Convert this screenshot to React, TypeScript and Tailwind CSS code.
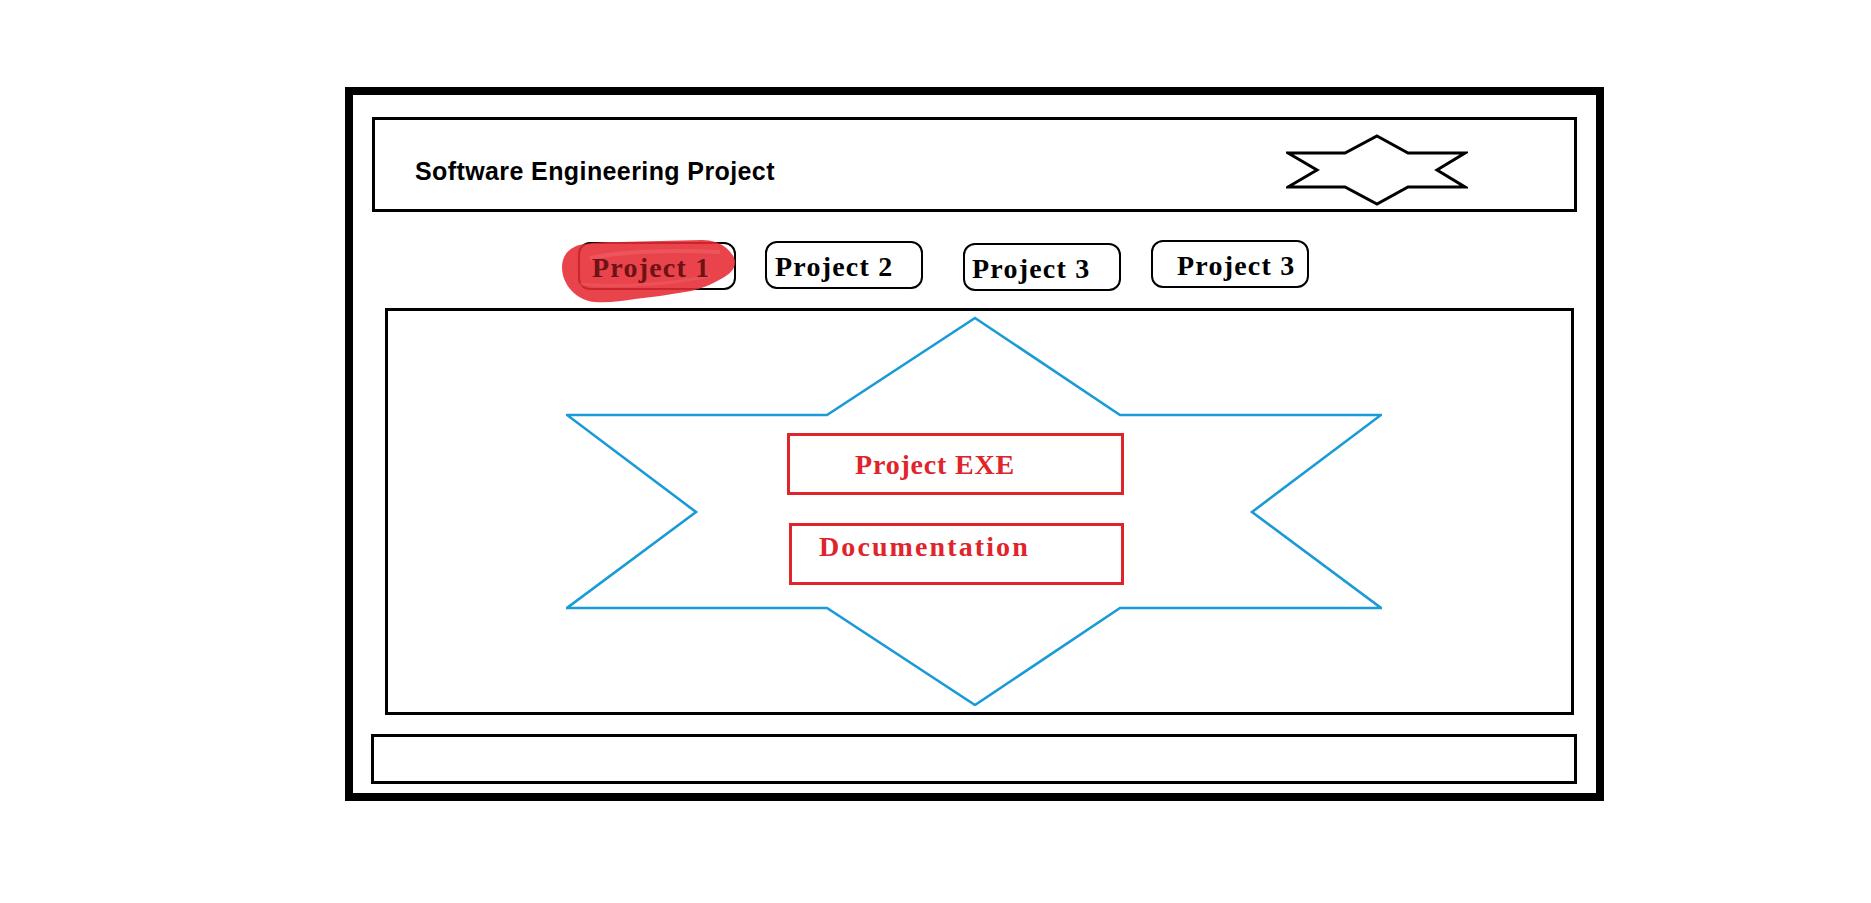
import React from "react";

const serif = "font-['Liberation_Serif',serif] font-bold";

const tabs = [
  { label: "Project 1", box: "ml-[225px] mt-[2px]", text: "pl-[12px]", active: true },
  { label: "Project 2", box: "ml-[29px] mt-[1px]", text: "pl-[8px]" },
  { label: "Project 3", box: "ml-[40px] mt-[3px]", text: "pl-[7px]" },
  { label: "Project 3", box: "ml-[30px]", text: "pl-[24px]" },
];

function HeaderStar() {
  return (
    <svg width="182" height="72" viewBox="0 0 182 72" className="block">
      <polygon
        points="91,2 122,19 179,19 151,36 179,53 122,53 91,70 59,53 2,53 31,36 2,19 59,19"
        fill="none"
        stroke="#000"
        strokeWidth="3"
        strokeLinejoin="miter"
      />
    </svg>
  );
}

function Highlight() {
  // red marker scribble over the active tab
  return (
    <svg
      width="180"
      height="70"
      viewBox="-20 -6 180 70"
      className="pointer-events-none absolute left-[-20px] top-[-6px]"
    >
      <path
        d="M -18 23 C -18 8, -6 1, 5 0 C 20 -2, 30 -2, 39 -2 L 122 -4 C 132 -4, 140 -1, 145 3 C 151 8, 156 14, 155 20 C 154 27, 147 32, 139 36 C 128 42, 118 46, 105 48 C 88 51, 72 53, 55 55 C 42 57, 28 59, 15 58 C -2 57, -18 42, -18 23 Z"
        fill="#e62a33"
        fillOpacity="0.88"
      />
      <path d="M 10 14 C 40 8, 90 6, 140 8" stroke="#f06a70" strokeWidth="4" fill="none" strokeOpacity="0.45" />
      <path d="M 0 40 C 40 44, 90 40, 130 32" stroke="#f06a70" strokeWidth="3" fill="none" strokeOpacity="0.35" />
    </svg>
  );
}

function Tab({ label, box, text, active }: { label: string; box: string; text: string; active?: boolean }) {
  return (
    <div className={`relative h-[48px] w-[158px] rounded-[12px] border-2 border-black ${box}`}>
      {active && <Highlight />}
      <div
        className={`relative flex h-full items-start pt-[10px] text-[28px] leading-none tracking-[1.2px] ${serif} ${text} ${
          active ? "text-[#6e1216]" : "text-black"
        }`}
      >
        {label}
      </div>
    </div>
  );
}

function BigStar() {
  return (
    <svg width="816" height="390" viewBox="0 0 816 390" className="absolute inset-0">
      <polygon
        points="409,2 554,99 815,99 686,196 815,292 554,292 409,389 261,292 1,292 130,196 1,99 261,99"
        fill="none"
        stroke="#1a9ad6"
        strokeWidth="2.6"
      />
    </svg>
  );
}

export default function App() {
  return (
    <div className="h-[903px] w-[1871px] overflow-hidden bg-white">
      <div className="ml-[345px] mt-[87px] flex h-[714px] w-[1259px] flex-col border-[8px] border-black">
        {/* header */}
        <div className="mx-[19px] mt-[22px] flex h-[95px] items-start border-[3px] border-black">
          <div className="pl-[40px] pt-[39px] font-['Liberation_Sans',sans-serif] text-[25px] font-bold leading-none tracking-[0.4px] text-black">
            Software Engineering Project
          </div>
          <div className="ml-auto mr-[106px] mt-[14px]">
            <HeaderStar />
          </div>
        </div>

        {/* tabs */}
        <div className="mt-[28px] flex h-[52px] items-start">
          {tabs.map((t, i) => (
            <Tab key={i} {...t} />
          ))}
        </div>

        {/* content */}
        <div className="ml-[32px] mr-[22px] mt-[16px] h-[407px] border-[3px] border-black">
          <div className="relative ml-[178px] mt-[5px] h-[390px] w-[816px]">
            <BigStar />
            <div className="relative flex flex-col gap-[28px] pt-[117px]">
              <div
                className={`ml-[221px] h-[62px] w-[337px] border-[3px] border-[#e0242c] pl-[65px] pt-[15px] text-[28px] leading-none tracking-[0.8px] text-[#e0242c] ${serif}`}
              >
                Project EXE
              </div>
              <div
                className={`ml-[223px] h-[62px] w-[335px] border-[3px] border-[#e0242c] pl-[27px] pt-[7px] text-[28px] leading-none tracking-[2.1px] text-[#e0242c] ${serif}`}
              >
                Documentation
              </div>
            </div>
          </div>
        </div>

        {/* footer */}
        <div className="ml-[18px] mr-[19px] mt-[19px] h-[50px] border-[3px] border-black" />
      </div>
    </div>
  );
}
